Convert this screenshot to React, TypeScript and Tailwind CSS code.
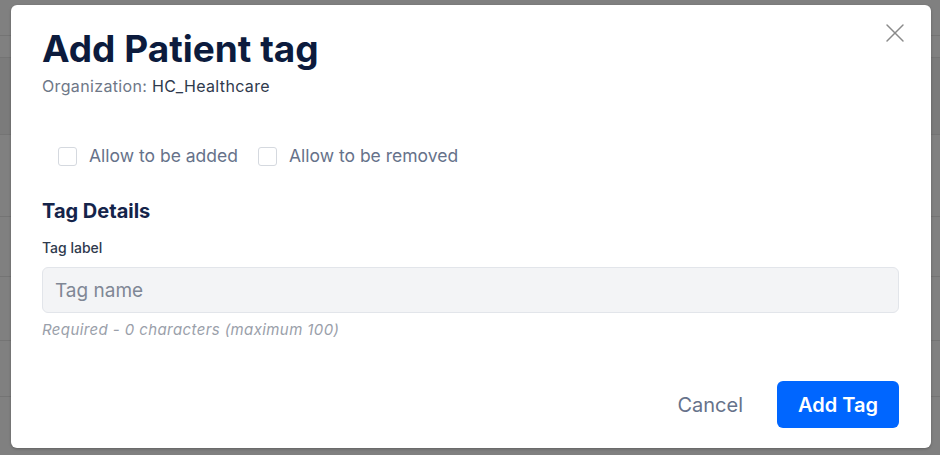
import { X } from "lucide-react"

const rows = [36, 22, 77, 82, 60, 64, 56]

function Checkbox({ label }: { label: string }) {
  return (
    <label className="flex items-center gap-3">
      <span className="w-[19px] h-[19px] rounded-[3px] border border-[#d5d9df] bg-white" />
      <span className="text-[17.5px] leading-6 text-[#66728a]">{label}</span>
    </label>
  )
}

export default function App() {
  return (
    <div className="relative h-[455px] w-[940px] overflow-hidden bg-[#808080] font-['Inter',sans-serif]">
      {/* Dimmed page behind the dialog */}
      <div className="flex flex-col">
        {rows.map((h, i) => (
          <div
            key={i}
            className={`border-b border-[#747474] ${i === 2 ? "bg-[#7b7b7b]" : ""}`}
            style={{ height: h }}
          />
        ))}
        <div className="pl-[22px] pt-[30px] text-[17px] text-[#2a2f3a]">Gender:</div>
      </div>

      {/* Dialog */}
      <div className="absolute left-[11px] top-[5px] flex h-[443px] w-[920px] flex-col rounded-md bg-white pl-[31px] pr-[32px] pt-[22px] pb-[20px] shadow-[0_1px_3px_rgba(0,0,0,0.25)]">
        <button className="absolute right-[20px] top-[12px] text-[#8a8a8a]">
          <X className="h-8 w-8" strokeWidth={1.1} />
        </button>

        <h1 className="text-[37px] font-bold leading-[44px] text-[#0c1b3d]">Add Patient tag</h1>
        <p className="mt-[5px] text-[16px] leading-5 tracking-[0.35px] text-[#6e7787]">
          Organization: <span className="text-[#2f3a4d]">HC_Healthcare</span>
        </p>

        <div className="mt-[48px] flex items-center gap-[20px] pl-4">
          <Checkbox label="Allow to be added" />
          <Checkbox label="Allow to be removed" />
        </div>

        <h2 className="mt-[29px] text-[20px] font-bold leading-7 text-[#14244a]">Tag Details</h2>
        <label className="mt-[13px] text-[14px] font-medium leading-5 text-[#2f3a4d]">Tag label</label>
        <input
          placeholder="Tag name"
          className="mt-[9px] h-[46px] w-full rounded-md border border-[#e2e5ea] bg-[#f3f4f6] px-3 text-[19px] text-[#1f2937] placeholder:text-[#7f8795] outline-none"
        />
        <p className="mt-[7px] text-[15px] italic leading-5 tracking-[0.4px] text-[#9aa0aa]">
          Required - 0 characters (maximum 100)
        </p>

        <div className="mt-auto flex items-center justify-end gap-[34px]">
          <button className="text-[20px] text-[#66728a]">Cancel</button>
          <button className="h-[47px] w-[122px] rounded-md bg-[#0066ff] text-[20px] font-semibold text-white">
            Add Tag
          </button>
        </div>
      </div>
    </div>
  )
}
